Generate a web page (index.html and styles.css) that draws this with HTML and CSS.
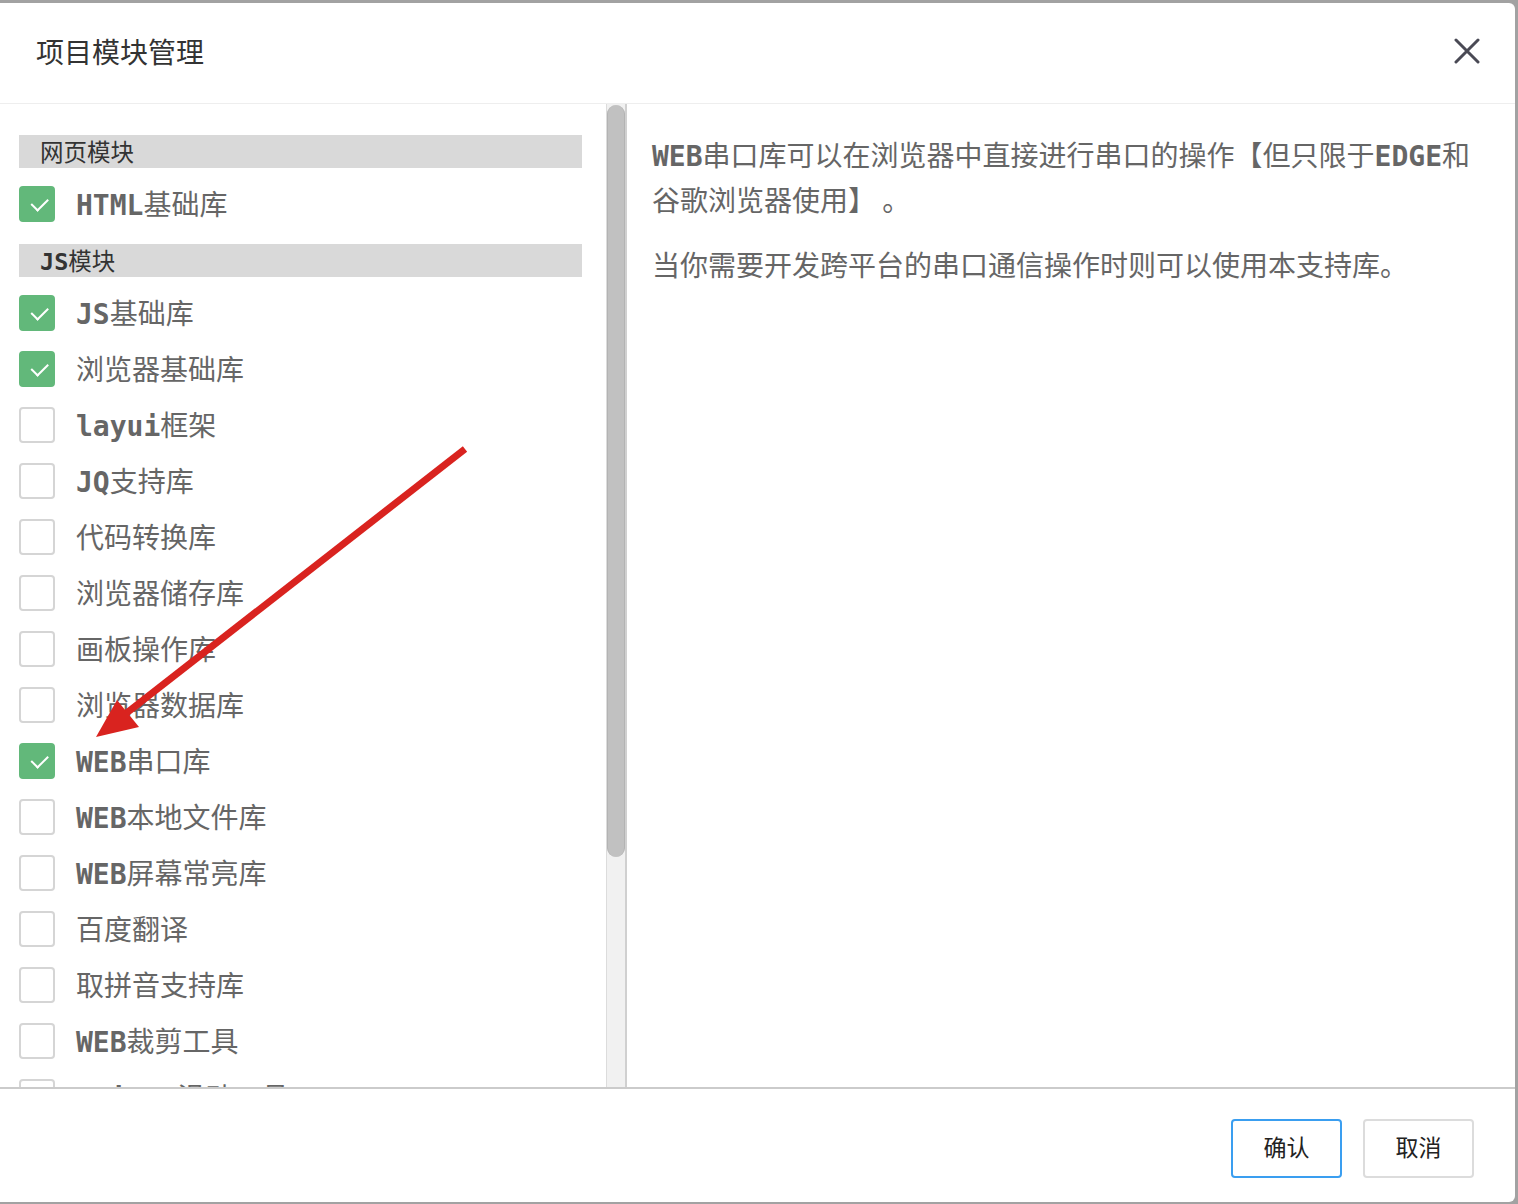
FILE: index.html
```html
<!DOCTYPE html>
<html lang="zh">
<head>
<meta charset="utf-8">
<title>项目模块管理</title>
<link rel="stylesheet" href="styles.css">
</head>
<body>
<div class="dialog">
  <div class="header">
    <div class="title">项目模块管理</div>
    <div class="close" aria-label="关闭">
      <svg width="26" height="26" viewBox="0 0 26 26"><path d="M2 2 L24 24 M24 2 L2 24" stroke="#4a4a55" stroke-width="3" fill="none" stroke-linecap="round"/></svg>
    </div>
  </div>
  <div class="body">
    <div class="left">
      <div class="list">
        <div class="group">网页模块</div>
        <label class="item"><span class="box on"></span><span class="text"><span class="en">HTML</span>基础库</span></label>
        <div class="group gap"><span class="en">JS</span>模块</div>
        <label class="item"><span class="box on"></span><span class="text"><span class="en">JS</span>基础库</span></label>
        <label class="item"><span class="box on"></span><span class="text">浏览器基础库</span></label>
        <label class="item"><span class="box"></span><span class="text"><span class="en">layui</span>框架</span></label>
        <label class="item"><span class="box"></span><span class="text"><span class="en">JQ</span>支持库</span></label>
        <label class="item"><span class="box"></span><span class="text">代码转换库</span></label>
        <label class="item"><span class="box"></span><span class="text">浏览器储存库</span></label>
        <label class="item"><span class="box"></span><span class="text">画板操作库</span></label>
        <label class="item"><span class="box"></span><span class="text">浏览器数据库</span></label>
        <label class="item"><span class="box on"></span><span class="text"><span class="en">WEB</span>串口库</span></label>
        <label class="item"><span class="box"></span><span class="text"><span class="en">WEB</span>本地文件库</span></label>
        <label class="item"><span class="box"></span><span class="text"><span class="en">WEB</span>屏幕常亮库</span></label>
        <label class="item"><span class="box"></span><span class="text">百度翻译</span></label>
        <label class="item"><span class="box"></span><span class="text">取拼音支持库</span></label>
        <label class="item"><span class="box"></span><span class="text"><span class="en">WEB</span>裁剪工具</span></label>
        <label class="item"><span class="box"></span><span class="text"><span class="en">Swiper</span>滑动工具</span></label>
      </div>
      <div class="scrollbar"><div class="thumb"></div></div>
    </div>
    <div class="right">
      <p><span class="en">WEB</span>串口库可以在浏览器中直接进行串口的操作【但只限于<span class="en">EDGE</span>和谷歌浏览器使用】 。</p>
      <p>当你需要开发跨平台的串口通信操作时则可以使用本支持库。</p>
    </div>
  </div>
  <div class="footer">
    <button class="btn primary">确认</button>
    <button class="btn">取消</button>
  </div>
  <svg class="arrow" width="1515" height="1199" viewBox="0 0 1515 1199">
    <line x1="465" y1="446" x2="124" y2="712" stroke="#d9231f" stroke-width="7"/>
    <polygon points="96,734 117,697 139,724" fill="#d9231f"/>
  </svg>
</div>
</body>
</html>
```
FILE: styles.css
```css
html, body {
  margin: 0;
  padding: 0;
}
body {
  background: #a2a2a2;
  height: 1204px;
  overflow: hidden;
  font-family: "Noto Sans CJK SC", "Noto Sans", sans-serif;
}
.dialog {
  position: relative;
  margin-top: 3px;
  width: 1515px;
  height: 1199px;
  background: #fff;
  border-radius: 0 6px 6px 0;
  display: flex;
  flex-direction: column;
  overflow: hidden;
}
.header {
  height: 100px;
  border-bottom: 1px solid #eeeeee;
  display: flex;
  align-items: center;
  justify-content: space-between;
  padding: 0 35px 0 36px;
  flex: none;
}
.title {
  font-size: 28px;
  color: #333;
  line-height: 1;
  margin-top: -4px;
}
.close {
  width: 26px;
  height: 26px;
  margin-top: -4px;
}
.body {
  flex: none;
  height: 983px;
  display: flex;
  border-bottom: 2px solid #cbcbcb;
}
.left {
  width: 627px;
  flex: none;
  display: flex;
}
.list {
  flex: 1;
  overflow: hidden;
  padding: 31px 24px 0 19px;
}
.scrollbar {
  width: 21px;
  flex: none;
  box-sizing: border-box;
  background: #f1f1f1;
  border-left: 1px solid #dcdcdc;
  border-right: 2px solid #d0d0d0;
  padding-top: 1px;
}
.thumb {
  height: 752px;
  box-sizing: border-box;
  background: #c1c1c1;
  border-left: 1px solid #b3b3b3;
  border-right: 1px solid #b3b3b3;
  border-radius: 9px;
}
.en {
  font-family: "DejaVu Sans Mono", monospace;
  font-weight: bold;
  line-height: 1;
}
.group {
  height: 33px;
  background: #d9d9d9;
  font-size: 23.5px;
  line-height: 33px;
  color: #333;
  padding-left: 21px;
  margin-bottom: 8px;
  font-family: "Noto Sans CJK SC", sans-serif;
}
.group.gap {
  margin-top: 12px;
}
.item {
  display: flex;
  align-items: center;
  height: 56px;
}
.box {
  width: 36px;
  height: 36px;
  box-sizing: border-box;
  border: 2px solid #d5d5d5;
  border-radius: 4px;
  margin-right: 21px;
  flex: none;
  position: relative;
}
.box.on {
  background: #62b87a;
  border-color: #62b87a;
}
.box.on::after {
  content: "";
  position: absolute;
  left: 10px;
  top: 6px;
  width: 14px;
  height: 8px;
  border-left: 2px solid #fff;
  border-bottom: 2px solid #fff;
  transform: rotate(-45deg) translate(-2px, 3px);
}
.text {
  font-family: "Noto Sans CJK SC", sans-serif;
  font-size: 28px;
  color: #666;
  line-height: 56px;
  margin-top: -2px;
  white-space: nowrap;
}
.right {
  flex: 1;
  padding: 28px 30px 0 25px;
}
.right p {
  margin: 0 0 20px 0;
  font-family: "Noto Sans CJK SC", sans-serif;
  font-size: 28px;
  line-height: 45px;
  color: #666;
}
.footer {
  flex: 1;
  display: flex;
  justify-content: flex-end;
  align-items: flex-start;
  gap: 21px;
  padding: 30px 41px 0 0;
}
.btn {
  width: 111px;
  height: 59px;
  box-sizing: border-box;
  background: #fff;
  border: 2px solid #dcdcdc;
  border-radius: 4px;
  font-family: "Noto Sans CJK SC", sans-serif;
  font-size: 23px;
  line-height: 1;
  color: #222;
  padding: 0 0 4px 0;
}
.btn.primary {
  border-color: #3a9ef0;
}
.arrow {
  position: absolute;
  left: 0;
  top: 0;
  pointer-events: none;
}
```
